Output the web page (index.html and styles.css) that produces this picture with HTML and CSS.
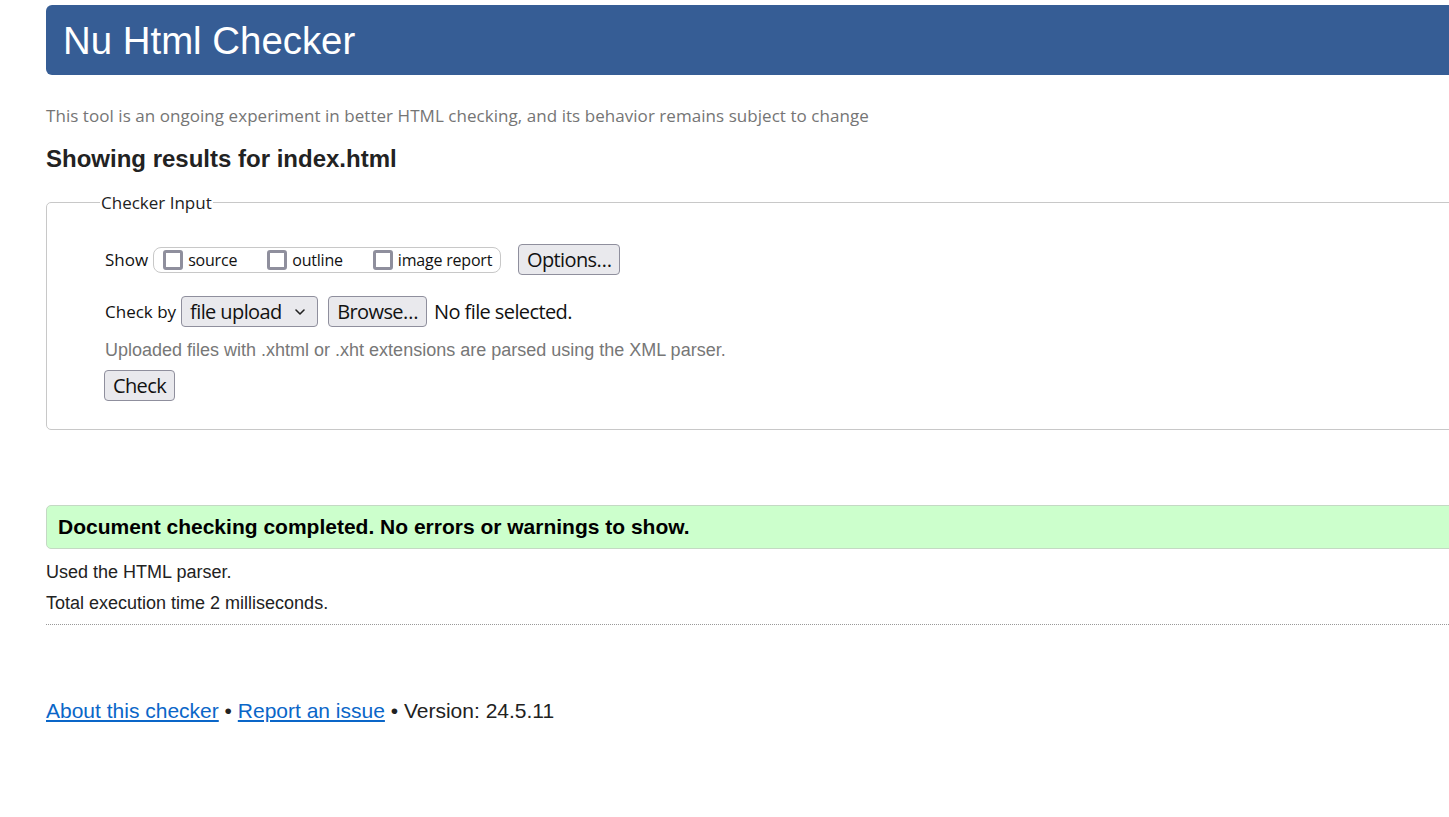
FILE: index.html
```html
<!DOCTYPE html>
<html lang="en">
<head>
<meta charset="utf-8">
<title>Showing results for index.html - Nu Html Checker</title>
<link rel="stylesheet" href="styles.css">
</head>
<body>
<div class="page">
  <header class="masthead"><h1>Nu Html Checker</h1></header>
  <p class="intro">This tool is an ongoing experiment in better HTML checking, and its behavior remains subject to change</p>
  <h2 class="results-for">Showing results for index.html</h2>
  <form class="check-form">
    <fieldset class="input-set">
      <legend>Checker Input</legend>
      <div class="row show-row">
        <span class="label">Show</span>
        <span class="opts">
          <label class="opt"><span class="cb"></span>source</label>
          <label class="opt"><span class="cb"></span>outline</label>
          <label class="opt"><span class="cb"></span>image report</label>
        </span>
        <button type="button" class="btn btn-options">Options…</button>
      </div>
      <div class="row by-row">
        <span class="label">Check by</span>
        <span class="select">file upload
          <svg class="chev" width="12" height="8" viewBox="0 0 12 8"><path d="M2 2 L6 6 L10 2" fill="none" stroke="#222" stroke-width="1.6" stroke-linecap="round" stroke-linejoin="round"/></svg>
        </span>
        <button type="button" class="btn btn-browse">Browse…</button>
        <span class="nofile">No file selected.</span>
      </div>
      <p class="note">Uploaded files with .xhtml or .xht extensions are parsed using the XML parser.</p>
      <button type="button" class="btn btn-check">Check</button>
    </fieldset>
  </form>
  <div class="success"><p>Document checking completed. No errors or warnings to show.</p></div>
  <p class="stat stat-first">Used the HTML parser.</p>
  <p class="stat">Total execution time 2 milliseconds.</p>
  <hr class="sep">
  <p class="footer"><a href="#">About this checker</a> • <a href="#">Report an issue</a> • Version: 24.5.11</p>
</div>
</body>
</html>
```

FILE: styles.css
```css
html, body {
  overflow: hidden;
}
body {
  margin: 0;
  background: #fff;
  color: #222;
  font-family: "Liberation Sans", Arial, sans-serif;
}
.page {
  margin: 5px 0 0 46px;
  width: calc(100% + 40px);
}
.masthead {
  background: #365d95;
  border-radius: 6px;
  height: 70px;
  display: flex;
  align-items: center;
  padding-left: 17px;
}
.masthead h1 {
  margin: 0;
  color: #fff;
  font-weight: normal;
  font-size: 38.4px;
  line-height: 1;
  padding-top: 2px;
}
.intro {
  margin: 29px 0 0;
  font-family: "Open Sans", sans-serif;
  font-size: 17px;
  line-height: 24px;
  color: #757575;
  letter-spacing: 0.05px;
}
.results-for {
  margin: 17px 0 0;
  font-size: 24px;
  line-height: 28px;
  font-weight: bold;
  color: #222;
}
.check-form {
  margin: 18px 0 0;
}
.input-set {
  margin: 0;
  border: 1px solid #c8c8c8;
  border-radius: 5px;
  padding: 30px 0 28px 58px;
  font-family: "Open Sans", sans-serif;
  font-size: 17px;
}
.input-set legend {
  padding: 0 1px;
  margin-left: -5px;
  font-size: 17px;
  color: #222;
}
.row {
  display: flex;
  align-items: center;
  color: #111;
}
.label {
  font-size: 17px;
  letter-spacing: 0;
}
.opts {
  display: flex;
  align-items: center;
  gap: 30px;
  height: 26px;
  box-sizing: border-box;
  border: 1px solid #c8c8c8;
  border-radius: 8px;
  margin-left: 5px;
  padding: 0 8px 0 9px;
}
.opt {
  display: flex;
  align-items: center;
  gap: 5px;
  font-size: 16px;
  letter-spacing: -0.2px;
}
.cb {
  width: 20px;
  height: 20px;
  box-sizing: border-box;
  border: 3px solid #8f8f9d;
  border-radius: 3px;
  background: #fff;
}
.btn {
  font-family: "Open Sans", sans-serif;
  font-size: 20px;
  letter-spacing: -0.6px;
  color: #111;
  background: #e9e9ed;
  border: 1px solid #8f8f9d;
  border-radius: 4px;
  height: 31px;
  padding: 0 6px;
  line-height: 1;
}
.btn-options {
  margin-left: 17px;
  width: 102px;
}
.show-row {
  height: 31px;
}
.by-row {
  margin-top: 21px;
  height: 31px;
}
.select {
  margin-left: 5px;
  height: 31px;
  width: 137px;
  box-sizing: border-box;
  display: flex;
  align-items: center;
  justify-content: space-between;
  background: #e9e9ed;
  border: 1px solid #8f8f9d;
  border-radius: 4px;
  padding: 0 11px 0 8px;
  font-size: 20px;
  letter-spacing: -0.6px;
}
.chev {
  display: block;
}
.btn-browse {
  margin-left: 10px;
  width: 99px;
}
.nofile {
  margin-left: 7px;
  font-size: 20px;
  letter-spacing: -0.6px;
}
.note {
  margin: 11px 0 0;
  font-family: "Liberation Sans", Arial, sans-serif;
  font-size: 18px;
  line-height: 24px;
  color: #777;
}
.btn-check {
  margin-top: 8px;
  margin-left: -1px;
  width: 71px;
  display: block;
}
.success {
  margin-top: 75px;
  height: 44px;
  box-sizing: border-box;
  background: #ccffcc;
  border: 1px solid #c4d9c4;
  border-radius: 5px;
  display: flex;
  align-items: center;
  padding-left: 11px;
}
.success p {
  margin: 0;
  font-weight: bold;
  font-size: 21px;
  color: #000;
}
.stat {
  margin: 0;
  font-size: 18px;
  line-height: 31px;
  color: #222;
}
.stat-first {
  margin-top: 8px;
}
.sep {
  margin: 5px 0 0;
  border: 0;
  border-top: 1px dotted #999;
  height: 0;
}
.footer {
  margin: 73px 0 0;
  font-size: 21px;
  line-height: 26px;
  color: #222;
}
.footer a {
  color: #0a66c8;
}
```
